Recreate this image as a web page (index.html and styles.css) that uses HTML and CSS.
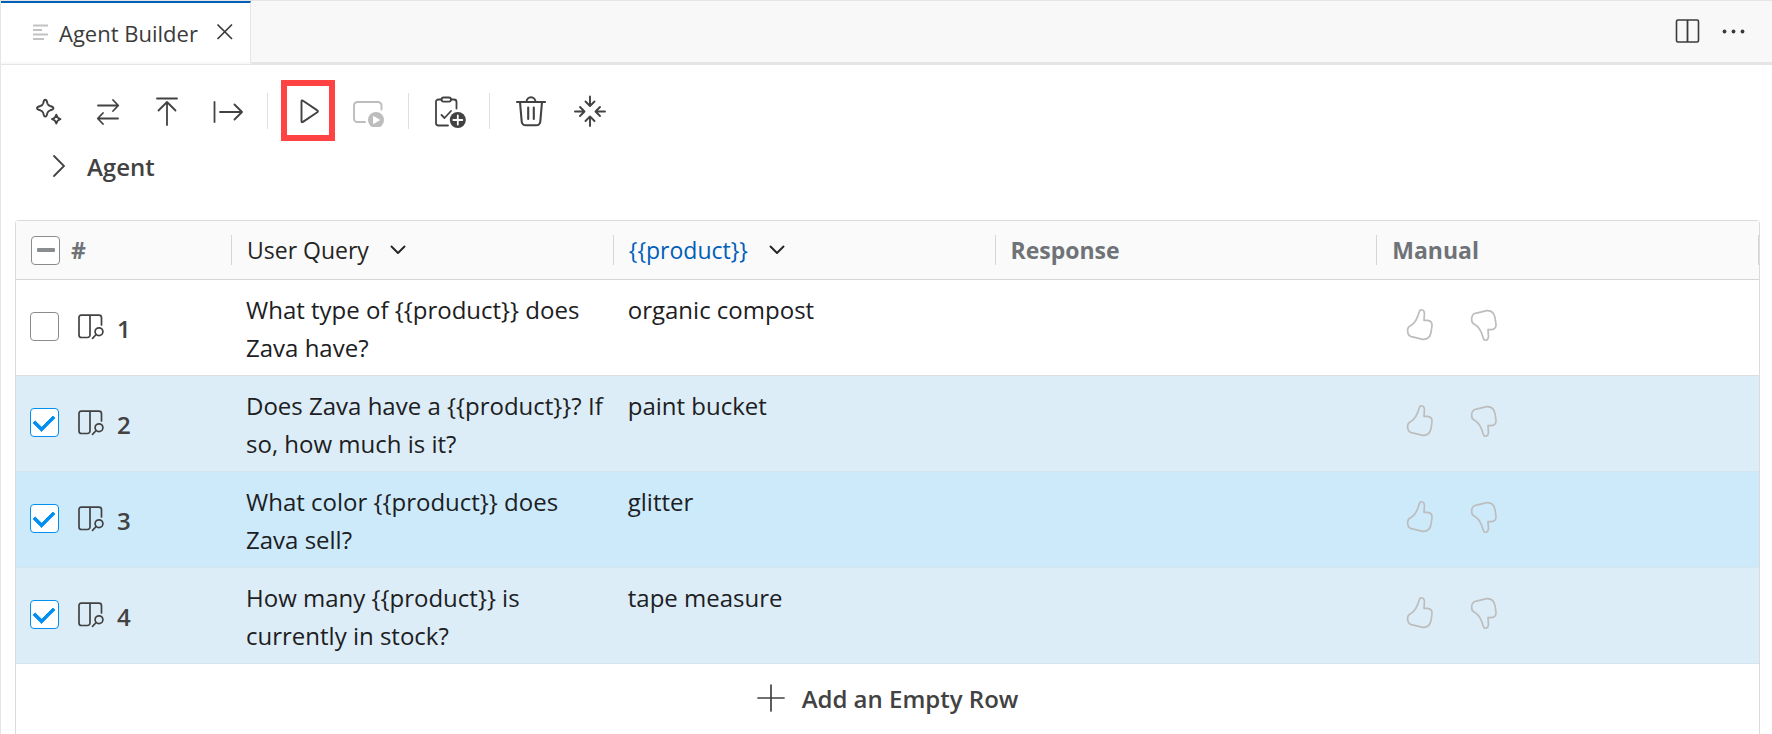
FILE: index.html
```
<!DOCTYPE html>
<html lang="en">
<head>
<meta charset="utf-8">
<title>Agent Builder</title>
<link rel="stylesheet" href="styles.css">
</head>
<body>
<svg class="defs" aria-hidden="true">
  <symbol id="dataset" viewBox="0 0 28 28">
    <g fill="none" stroke="currentColor" stroke-width="1.700" stroke-linecap="round" stroke-linejoin="round">
      <path d="M13 2.200V22a2.500 2.500 0 0 1-2.500 2.500H4.500A2.500 2.500 0 0 1 2 22V4.200A2 2 0 0 1 4 2.200H22A2.500 2.500 0 0 1 24.500 4.700V12"/>
      <circle cx="22" cy="18.700" r="3.900"/><path d="M19.200 21.500 15.500 25.300"/>
    </g>
  </symbol>
  <symbol id="thumb" viewBox="0 0 28 34">
    <path d="M15 1.800c2.600-.4 3.600 2 3.400 4.600L18 12.300h3.300c3.300.3 4.900 2.200 4.700 5.200l-.9 6.500c-.8 4.700-3.600 7.600-8.300 7.300L5.400 28.700C3 28 1.900 26 1.700 23.600 1.300 20.400 2 18.800 4.500 17.800 9 15.400 12 8.500 13.200 4c.3-1.100.7-2 1.800-2.200z" fill="none" stroke="currentColor" stroke-width="1.700" stroke-linejoin="round"/>
  </symbol>
  <symbol id="chevron" viewBox="0 0 18 12">
    <path d="M2.500 2.500 9 9 15.500 2.500" fill="none" stroke="currentColor" stroke-width="1.900" stroke-linecap="round" stroke-linejoin="round"/>
  </symbol>
</svg>

<header class="tabbar">
  <div class="tab">
    <svg class="tab-icon" width="16" height="18" viewBox="0 0 16 18"><path d="M0 2.500H15M0 7H9M0 11.500H15M0 16H11" stroke="#c2c2c2" stroke-width="2"/></svg>
    <span class="tab-title">Agent Builder</span>
    <button class="icon-button" aria-label="Close"><svg width="18" height="18" viewBox="0 0 18 18"><path d="M1.500 1.500 16 16M16 1.500 1.500 16" stroke="#3b3b3b" stroke-width="1.700"/></svg></button>
  </div>
  <div class="tab-actions">
    <button class="icon-button" aria-label="Split editor"><svg width="26" height="26" viewBox="0 0 26 26"><rect x="1.500" y="1" width="22" height="22" rx="1.500" fill="none" stroke="#3b3b3b" stroke-width="1.600"/><path d="M12.500 1V23" stroke="#3b3b3b" stroke-width="1.800"/></svg></button>
    <button class="icon-button" aria-label="More actions"><svg width="26" height="26" viewBox="0 0 26 26" fill="#3b3b3b"><circle cx="3.500" cy="12.500" r="1.900"/><circle cx="12.500" cy="12.500" r="1.900"/><circle cx="21.500" cy="12.500" r="1.900"/></svg></button>
  </div>
</header>

<main class="panel">
  <div class="toolbar" role="toolbar">
    <button class="tool" aria-label="Generate"><svg width="32" height="32" viewBox="0 0 32 32" fill="none" stroke="currentColor" stroke-width="1.900" stroke-linejoin="round"><path d="M14.300 4.800Q15.800 4.800 16.300 8.200Q17 10.300 19.200 11Q22.400 11.900 22.400 13.200Q22.400 14.600 19.200 15.300Q17 16 16.300 18.200Q15.800 21.600 14.300 21.600Q12.800 21.600 12.300 18.200Q11.600 16 9.400 15.300Q6 14.600 6 13.200Q6 11.900 9.400 11Q11.600 10.300 12.300 8.200Q12.800 4.800 14.300 4.800Z"/><path d="M25.300 19.800Q26.100 23.300 29.500 24.100Q26.100 24.900 25.300 28.500Q24.500 24.900 21 24.100Q24.500 23.300 25.300 19.800Z"/></svg></button>
    <button class="tool" aria-label="Swap"><svg width="32" height="32" viewBox="0 0 32 32" fill="none" stroke="currentColor" stroke-width="1.800" stroke-linecap="round" stroke-linejoin="round"><path d="M7 10.500H27M22 5 27.300 10.500 22 16M27 23.500H7M12 18 6.700 23.500 12 29"/></svg></button>
    <button class="tool" aria-label="Import"><svg width="32" height="32" viewBox="0 0 32 32" fill="none" stroke="currentColor" stroke-width="1.800" stroke-linecap="round" stroke-linejoin="round"><path d="M6 3.500H26M16 30V7M7.500 15.500 16 7 24.500 15.500"/></svg></button>
    <button class="tool" aria-label="Export"><svg width="32" height="32" viewBox="0 0 32 32" fill="none" stroke="currentColor" stroke-width="1.800" stroke-linecap="round" stroke-linejoin="round"><path d="M3.500 7V27M9 17H30.500M23.500 9.500 31 17 23.500 24.500"/></svg></button>
    <span class="divider"></span>
    <button class="tool highlighted" aria-label="Run"><svg width="32" height="32" viewBox="0 0 32 32" fill="none" stroke="currentColor" stroke-width="1.900" stroke-linejoin="round"><path d="M9.500 6.500Q9.500 4.800 11 5.700L25.300 15.400Q26.500 16.300 25.300 17.200L11 26.900Q9.500 27.700 9.500 26Z"/></svg></button>
    <button class="tool" aria-label="Run all" disabled><svg width="34" height="32" viewBox="0 0 34 32"><path d="M14 27H6.500A3.500 3.500 0 0 1 3 23.500V10.500A3.500 3.500 0 0 1 6.500 7H27A3.500 3.500 0 0 1 30.500 10.500V14.500" fill="none" stroke="currentColor" stroke-width="1.900" stroke-linecap="round"/><circle cx="25" cy="25" r="8" fill="currentColor"/><path d="M22.500 21.500V28.500L28.500 25Z" fill="#fff" stroke="#fff" stroke-linejoin="round"/></svg></button>
    <span class="divider"></span>
    <button class="tool" aria-label="Add evaluation"><svg width="34" height="34" viewBox="0 0 34 34" fill="none" stroke="currentColor" stroke-width="1.800" stroke-linecap="round" stroke-linejoin="round"><path d="M9.500 5.500H6.500A2.500 2.500 0 0 0 4 8V29A2.500 2.500 0 0 0 6.500 31.500H16M19 5.500H22A2.500 2.500 0 0 1 24.500 8V14.500"/><rect x="9.500" y="3.500" width="9.500" height="4.200" rx="2.100"/><path d="M9.500 21 12.500 24 19 17"/><circle cx="25.800" cy="26" r="8" fill="currentColor" stroke="none"/><path d="M25.800 21.500V30.500M21.300 26H30.300" stroke="#fff"/></svg></button>
    <span class="divider"></span>
    <button class="tool" aria-label="Delete"><svg width="32" height="32" viewBox="0 0 32 32" fill="none" stroke="currentColor" stroke-width="2.100" stroke-linecap="round" stroke-linejoin="round"><path d="M3 7H31M12.500 7A4.500 4.800 0 0 1 21.500 7M6 7 7.700 26.500A4 4 0 0 0 11.700 30.300H22.300A4 4 0 0 0 26.300 26.500L28 7M14.200 12.500V24M19.800 12.500V24"/></svg></button>
    <button class="tool" aria-label="Collapse"><svg width="32" height="32" viewBox="0 0 32 32" fill="none" stroke="currentColor" stroke-width="1.900" stroke-linecap="round" stroke-linejoin="round"><path d="M16 1.500V10.500M11.500 6.500 16 11 20.500 6.500M16 31V21.500M11.500 26 16 21.500 20.500 26M1 16.500H10.300M6 12 10.500 16.500 6 21M31 16.500H21.700M26 12 21.500 16.500 26 21"/></svg></button>
  </div>

  <button class="section">
    <svg width="14" height="24" viewBox="0 0 14 24"><path d="M2 2 12 12 2 22" fill="none" stroke="currentColor" stroke-width="1.800" stroke-linecap="round"/></svg>
    <span>Agent</span>
  </button>

  <div class="grid">
    <table>
      <colgroup><col class="col-index"><col><col><col><col></colgroup>
      <thead>
        <tr>
          <th><div class="head"><input type="checkbox" class="check mixed" aria-label="Select all rows"><span class="hash">#</span></div></th>
          <th><div class="head sortable">User Query<button class="icon-button" aria-label="User Query options"><svg width="18" height="12"><use href="#chevron"/></svg></button></div></th>
          <th><div class="head sortable variable"><span>{{product}}</span><button class="icon-button" aria-label="product options"><svg width="18" height="12"><use href="#chevron"/></svg></button></div></th>
          <th><div class="head">Response</div></th>
          <th><div class="head">Manual</div></th>
        </tr>
      </thead>
      <tbody>
        <tr>
          <td class="index"><div class="row-head"><input type="checkbox" class="check" aria-label="Select row 1"><button class="icon-button" aria-label="View row 1"><svg width="28" height="28"><use href="#dataset"/></svg></button><span class="num">1</span></div></td>
          <td>What type of {{product}} does Zava have?</td><td>organic compost</td><td></td>
          <td><div class="votes"><button class="icon-button" aria-label="Thumbs up"><svg width="28" height="34"><use href="#thumb"/></svg></button><button class="icon-button down" aria-label="Thumbs down"><svg width="28" height="34"><use href="#thumb"/></svg></button></div></td>
        </tr>
        <tr class="selected">
          <td class="index"><div class="row-head"><input type="checkbox" class="check" checked aria-label="Select row 2"><button class="icon-button" aria-label="View row 2"><svg width="28" height="28"><use href="#dataset"/></svg></button><span class="num">2</span></div></td>
          <td>Does Zava have a {{product}}? If so, how much is it?</td><td>paint bucket</td><td></td>
          <td><div class="votes"><button class="icon-button" aria-label="Thumbs up"><svg width="28" height="34"><use href="#thumb"/></svg></button><button class="icon-button down" aria-label="Thumbs down"><svg width="28" height="34"><use href="#thumb"/></svg></button></div></td>
        </tr>
        <tr class="selected active">
          <td class="index"><div class="row-head"><input type="checkbox" class="check" checked aria-label="Select row 3"><button class="icon-button" aria-label="View row 3"><svg width="28" height="28"><use href="#dataset"/></svg></button><span class="num">3</span></div></td>
          <td>What color {{product}} does Zava sell?</td><td>glitter</td><td></td>
          <td><div class="votes"><button class="icon-button" aria-label="Thumbs up"><svg width="28" height="34"><use href="#thumb"/></svg></button><button class="icon-button down" aria-label="Thumbs down"><svg width="28" height="34"><use href="#thumb"/></svg></button></div></td>
        </tr>
        <tr class="selected">
          <td class="index"><div class="row-head"><input type="checkbox" class="check" checked aria-label="Select row 4"><button class="icon-button" aria-label="View row 4"><svg width="28" height="28"><use href="#dataset"/></svg></button><span class="num">4</span></div></td>
          <td>How many {{product}} is currently in stock?</td><td>tape measure</td><td></td>
          <td><div class="votes"><button class="icon-button" aria-label="Thumbs up"><svg width="28" height="34"><use href="#thumb"/></svg></button><button class="icon-button down" aria-label="Thumbs down"><svg width="28" height="34"><use href="#thumb"/></svg></button></div></td>
        </tr>
      </tbody>
    </table>
    <button class="add-row"><svg width="28" height="28" viewBox="0 0 28 28"><path d="M14 1V27M1 14H27" stroke="currentColor" stroke-width="1.700" stroke-linecap="round"/></svg>Add an Empty Row</button>
  </div>
</main>
</body>
</html>
```
FILE: styles.css
```
* { box-sizing: border-box; }

html, body { height: 100%; }

body {
  margin: 0;
  display: flex;
  flex-direction: column;
  overflow: hidden;
  background: #fff;
  border-top: 1px solid #e5e5e5;
  border-left: 1px solid #e5e5e5;
  color: #424242;
  font-family: "Open Sans", "Noto Sans", sans-serif;
  font-size: 24px;
}

.defs { display: none; }

button {
  margin: 0;
  padding: 0;
  border: 0;
  background: none;
  color: inherit;
  font: inherit;
}

svg { display: block; flex: none; }

.icon-button { flex: none; }

/* Tab bar */
.tabbar {
  flex: none;
  display: flex;
  justify-content: space-between;
  height: 64px;
  background: #f8f8f8;
  border-bottom: 3px solid #e5e5e5;
}

.tab {
  display: flex;
  align-items: center;
  height: 63px;
  padding: 0 16px 2px 32px;
  background: #fff;
  border-top: 2px solid #005fb8;
  border-right: 1px solid #e5e5e5;
  border-bottom: 2px solid #f8f8f8;
  color: #3b3b3b;
}

.tab-title { margin: 3px 18px 0 10px; font-size: 22px; }

.tab-actions {
  display: flex;
  align-items: center;
  gap: 20px;
  padding-right: 25px;
}

/* Toolbar */
.panel {
  flex: 1;
  display: flex;
  flex-direction: column;
  min-height: 0;
  padding: 15px 12px 0 14px;
}

.toolbar {
  flex: none;
  display: flex;
  align-items: center;
  gap: 6px;
  padding-left: 5px;
}

.tool {
  display: grid;
  place-items: center;
  min-width: 54px;
  height: 61px;
  padding: 0 10px;
}

.tool:disabled { color: #bdbdbd; }

.highlighted { box-shadow: inset 0 0 0 6px #ff4343; }

.divider {
  width: 1px;
  height: 36px;
  margin: 0 7px;
  background: #e0e0e0;
}

.section {
  flex: none;
  align-self: flex-start;
  display: flex;
  align-items: center;
  gap: 21px;
  height: 50px;
  margin-bottom: 29px;
  padding-left: 37px;
  font-weight: 600;
}

/* Table */
.grid {
  flex: 1;
  border: 1px solid #d9dbdc;
  border-bottom: 0;
  border-radius: 4px 4px 0 0;
}

table {
  width: 100%;
  table-layout: fixed;
  border-collapse: separate;
  border-spacing: 0;
}

.col-index { width: 216px; }

th {
  padding: 14px 0;
  background: #fafafa;
  border-bottom: 1px solid #d4d6d7;
  color: #6f7377;
  font-size: 23px;
  font-weight: 700;
  text-align: left;
}

.head {
  display: flex;
  align-items: center;
  height: 30px;
  padding-left: 15px;
  border-right: 1px solid #d4d6d7;
  line-height: 32px;
}

.hash { margin-left: 11px; }

.sortable {
  gap: 20px;
  color: #242424;
  font-weight: 400;
}

.variable span { color: #005fb8; }

td {
  height: 96px;
  padding: 11px 8px 8px 14px;
  border-bottom: 1px solid #dcdfe1;
  color: #1c2023;
  line-height: 38px;
  vertical-align: top;
}

td.index {
  padding-top: 8px;
  padding-bottom: 10px;
  color: #424242;
  vertical-align: middle;
}

.selected td { background: #dcedf7; border-bottom-color: #d5e5ee; }
.active td { background: #cdeafb; }

.row-head { display: flex; align-items: center; }

.row-head .icon-button { margin-left: 18px; }

.num {
  margin: 4px 0 0 12px;
  font-weight: 600;
}

.check {
  appearance: none;
  flex: none;
  display: grid;
  place-items: center;
  width: 29px;
  height: 29px;
  margin: 0;
  background: #fff;
  border: 1px solid #8a8d90;
  border-radius: 4px;
}

.check:checked { border-color: #0090f1; }

.check:checked::before {
  content: "";
  width: 16px;
  height: 9px;
  margin: 0 2px 5px 0;
  border: solid #0090f1;
  border-width: 0 0 4px 4px;
  border-radius: 1px;
  rotate: -45deg;
}

.mixed::before {
  content: "";
  width: 18px;
  height: 4px;
  border-radius: 1px;
  background: #8a8d90;
}

.votes {
  display: flex;
  gap: 36px;
  padding: 17px 0 0 15px;
  color: #bdbdbd;
}

.down { transform: rotate(180deg) scaleX(-1); }

.add-row {
  display: flex;
  align-items: center;
  justify-content: center;
  gap: 17px;
  width: 100%;
  height: 68px;
  font-weight: 600;
}
```
